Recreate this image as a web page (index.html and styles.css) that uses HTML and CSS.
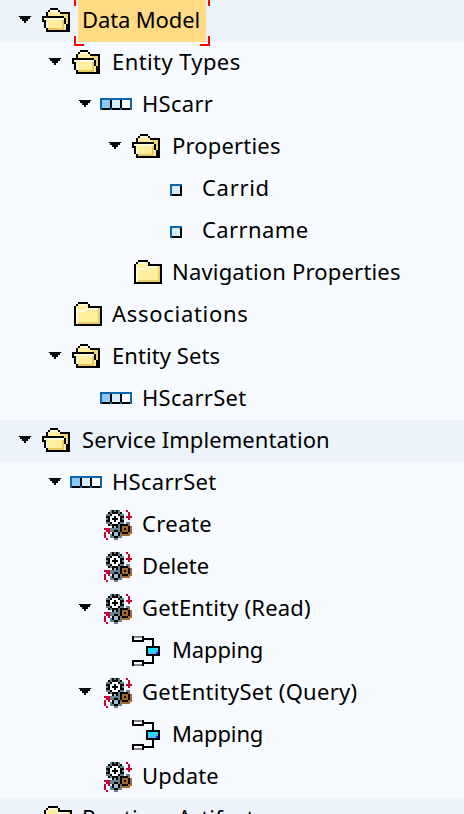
FILE: index.html
```html
<!DOCTYPE html>
<html lang="en">
<head>
<meta charset="utf-8">
<title>Data Model</title>
<link rel="stylesheet" href="styles.css">
</head>
<body>
<svg class="sprites" aria-hidden="true">
  <symbol id="arrow" viewBox="0 0 14 10">
    <path fill="#b9bec7" d="M0 1h14v1h-2v2h-2v2H8v2H6V6H4V4H2V2H0z"/>
    <path fill="#080808" d="M1 1h12v1h-1v2h-2v2H8v2H6V6H4V4H2V2H1z"/>
  </symbol>
  <symbol id="open" viewBox="0 0 16 16">
    <path fill="#ffee9b" d="M4 2h6v1h5v9H4V9H3V6H2V5h2z"/>
    <path fill="#f1d870" d="M11 4h3v8h-1V6h-2z"/>
    <path fill="#fffbdc" d="M5 2h4v1H5zM2 6h10v1H2zM2 7h1v1H2zM3 8h1v2H3z"/>
    <path fill="#e6c85d" d="M4 11h8v1H4zM11 7h1v4h-1z"/>
    <path stroke="#000" d="M5 1.5h4M4 2.5h1M9 2.5h1M3 3.5h1M10 3.5h5M3 4.5h1M1 5.5h11M1.5 5v3M2.5 7v4M3.5 11v2M3 12.5h12M14.5 3v10M12.5 6v3M13.5 9v3"/>
  </symbol>
  <symbol id="closed" viewBox="0 0 16 16">
    <path fill="#ffee9b" d="M3 2h6v1h6v9H3z"/>
    <path fill="#fffbdc" d="M4 2h4v1H4zM3 4h1v8H3zM4 5h4v1H4zM8 4h6v1H8z"/>
    <path fill="#e9cf68" d="M4 11h10v1H4zM14 4h1v8h-1z"/>
    <path stroke="#000" d="M4 1.5h5M3 2.5h1M9 2.5h1M2.5 3v10M9 3.5h7M15.5 3v10M2 12.5h14"/>
  </symbol>
  <symbol id="table" viewBox="0 0 16 16">
    <path fill="#0866aa" d="M0 4h16v6H0z"/>
    <path fill="#000" d="M1 9h4v1H1zM6 9h4v1H6zM11 9h4v1h-4zM5 5h1v4H5zM10 5h1v4h-1z"/>
    <path fill="#8bcaf2" d="M1 5h4v4H1z"/>
    <path fill="#d5edfa" d="M6 5h4v4H6z"/>
    <path fill="#fff" d="M11 5h4v4h-4z"/>
  </symbol>
  <symbol id="field" viewBox="0 0 16 16">
    <path fill="#0866aa" d="M5 5h6v6H5z"/>
    <path fill="#000" d="M6 10h5v1H6zM10 6h1v5h-1z"/>
    <path fill="#d5edfa" d="M6 6h4v4H6z"/>
  </symbol>
  <symbol id="gears" viewBox="-2 0 16 16">
    <path fill="#69808e" d="M3 0h5v1h1v1h1v5h1v1H9v1H8v2h1v3H7v1H5v-1H3v-2h1v-1H3V9h1V8H2V7H1V2h1V1h1zM11 6h2v1h-2zM9 12h4v1H9z"/>
    <path fill="#a1b9d5" d="M5 11h2v2H5zM4 8h2v1H4z"/>
    <path fill="#a5692f" d="M8 7h5v1h1v4h-1v1H9v-1H8z"/>
    <path stroke="#000" d="M4 .5h1M6 .5h1M2 1.5h1M4 1.5h3M8 1.5h1M3 2.5h1M7 2.5h1M1 3.5h2M8 3.5h2M2 4.5h1M8 4.5h1M1 5.5h2M8 5.5h2M3 6.5h1M7 6.5h1M2 7.5h1M4 7.5h3M8 7.5h1M4 8.5h1M6 8.5h1M9 7.5h3M8 8.5h1M12 8.5h1M8 9.5h1M12 9.5h1M8 10.5h1M12 10.5h1M9 11.5h3M5 10.5h2M4 11.5h1M7 11.5h1M4 12.5h1M7 12.5h1M5 13.5h2"/>
    <path fill="#fff" d="M4 2h3v1h1v3H7v1H4V6H3V3h1z"/>
    <path stroke="#000" d="M5 3.5h1M4 4.5h3M5 5.5h1M10 9.5h1"/>
    <path stroke="#c8002f" d="M11 .5h1M12 1.5h1M12 2.5h1M11 3.5h3M12 4.5h1M0 9.5h3M1 10.5h2M0 11.5h1M2 11.5h1M0 12.5h1M0 13.5h1M1 14.5h1"/>
  </symbol>
  <symbol id="mapping" viewBox="-1 0 16 16">
    <path fill="#fff" d="M1 1h4v1H1zM1 13h4v1H1z"/>
    <path stroke="#858585" d="M1 .5h4M1 14.5h4"/>
    <path stroke="#000" d="M.5 0v3M5.5 0v3M0 2.5h6M.5 12v3M5.5 12v3M0 12.5h6M6 1.5h5M10.5 1v4M10.5 10v4M6 13.5h5"/>
    <path fill="#000" d="M7 5h7v5H7z"/>
    <path fill="#18dfff" d="M8 6h5v1h-2v1H8z"/>
    <path fill="#55b8ff" d="M11 7h2v1h-1v1H8V8h3z"/>
    <path fill="#003cff" d="M12 8h1v1h-1z"/>
  </symbol>
</svg>
<main class="tree">
  <div class="row band d0"><svg class="arrow"><use href="#arrow"/></svg><svg class="icon"><use href="#open"/></svg><span class="label selected tightest">Data Model<i class="corner tl"></i><i class="corner tr"></i><i class="corner bl"></i><i class="corner br"></i></span></div>
  <div class="row d1"><svg class="arrow"><use href="#arrow"/></svg><svg class="icon"><use href="#open"/></svg><span class="label loose">Entity Types</span></div>
  <div class="row d2"><svg class="arrow"><use href="#arrow"/></svg><svg class="icon"><use href="#table"/></svg><span class="label">HScarr</span></div>
  <div class="row d3"><svg class="arrow"><use href="#arrow"/></svg><svg class="icon"><use href="#open"/></svg><span class="label snug">Properties</span></div>
  <div class="row d4"><span class="arrow"></span><svg class="icon"><use href="#field"/></svg><span class="label loosest">Carrid</span></div>
  <div class="row d4"><span class="arrow"></span><svg class="icon"><use href="#field"/></svg><span class="label loose">Carrname</span></div>
  <div class="row d3"><span class="arrow"></span><svg class="icon"><use href="#closed"/></svg><span class="label snug">Navigation Properties</span></div>
  <div class="row d1"><span class="arrow"></span><svg class="icon"><use href="#closed"/></svg><span class="label loosest">Associations</span></div>
  <div class="row d1"><svg class="arrow"><use href="#arrow"/></svg><svg class="icon"><use href="#open"/></svg><span class="label tight">Entity Sets</span></div>
  <div class="row d2"><span class="arrow"></span><svg class="icon"><use href="#table"/></svg><span class="label">HScarrSet</span></div>
  <div class="row band d0"><svg class="arrow"><use href="#arrow"/></svg><svg class="icon"><use href="#open"/></svg><span class="label tight">Service Implementation</span></div>
  <div class="row d1"><svg class="arrow"><use href="#arrow"/></svg><svg class="icon"><use href="#table"/></svg><span class="label">HScarrSet</span></div>
  <div class="row d2"><span class="arrow"></span><svg class="icon"><use href="#gears"/></svg><span class="label loose">Create</span></div>
  <div class="row d2"><span class="arrow"></span><svg class="icon"><use href="#gears"/></svg><span class="label tight">Delete</span></div>
  <div class="row d2"><svg class="arrow"><use href="#arrow"/></svg><svg class="icon"><use href="#gears"/></svg><span class="label snug">GetEntity (Read)</span></div>
  <div class="row d3"><span class="arrow"></span><svg class="icon"><use href="#mapping"/></svg><span class="label tightest">Mapping</span></div>
  <div class="row d2"><svg class="arrow"><use href="#arrow"/></svg><svg class="icon"><use href="#gears"/></svg><span class="label">GetEntitySet (Query)</span></div>
  <div class="row d3"><span class="arrow"></span><svg class="icon"><use href="#mapping"/></svg><span class="label tightest">Mapping</span></div>
  <div class="row d2"><span class="arrow"></span><svg class="icon"><use href="#gears"/></svg><span class="label snug">Update</span></div>
  <div class="row band d0"><span class="arrow"></span><svg class="icon"><use href="#closed"/></svg><span class="label">Runtime Artifacts</span></div>
</main>
</body>
</html>
```
FILE: styles.css
```css
body {
  margin: 0;
  background: #f7fbff;
  overflow: hidden;
}

.sprites {
  position: absolute;
  width: 0;
  height: 0;
}

.tree {
  height: 814px;
  overflow: hidden;
  font: 22px/42px "Noto Sans", "Open Sans", sans-serif;
  letter-spacing: 0.28px;
  color: #000;
}

.row {
  display: flex;
  height: 42px;
  padding-left: 18px;
  white-space: nowrap;
}

.band { background: #ecf3fb; }
.d1 { padding-left: 48px; }
.d2 { padding-left: 78px; }
.d3 { padding-left: 108px; }
.d4 { padding-left: 138px; }

.arrow {
  flex: none;
  width: 14px;
  height: 10px;
  margin: 15px 8px 0 0;
}

.icon {
  flex: none;
  width: 32px;
  height: 32px;
  margin-top: 6px;
  fill: none;
  shape-rendering: crispEdges;
}

.label {
  height: 42px;
  margin-left: 6px;
  padding: 0 4px;
  line-height: 38px;
}

.tightest { letter-spacing: -0.13px; }
.tight { letter-spacing: 0.07px; }
.snug { letter-spacing: 0.18px; }
.loose { letter-spacing: 0.4px; }
.loosest { letter-spacing: 0.7px; }

.selected {
  position: relative;
  box-sizing: border-box;
  width: 128px;
  background: #fedb84;
}

.corner {
  position: absolute;
  box-sizing: border-box;
  width: 10px;
  height: 10px;
  border: 0 solid #f00;
}

.tl { top: -4px; left: -4px; border-width: 2px 0 0 2px; }
.tr { top: -4px; right: -4px; border-width: 2px 2px 0 0; }
.bl { bottom: -4px; left: -4px; border-width: 0 0 2px 2px; }
.br { bottom: -4px; right: -4px; border-width: 0 2px 2px 0; }
```
